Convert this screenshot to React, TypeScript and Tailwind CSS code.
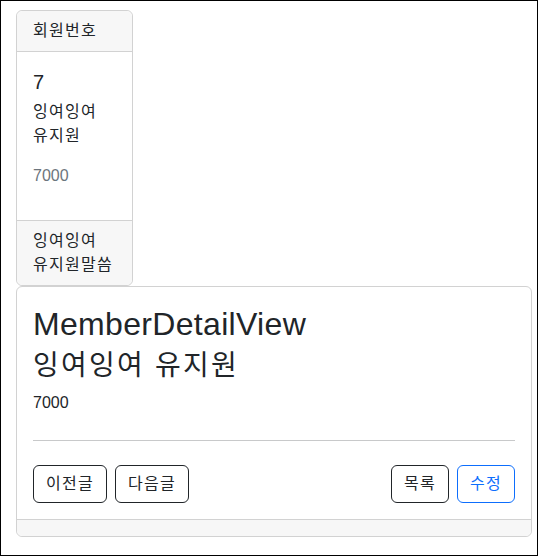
import React from "react";

const font = {
  fontFamily: '"Liberation Sans", "Noto Sans CJK KR", sans-serif',
};

// hangul text gets a bit of tracking to match the wider reference glyphs
function Ko({ children }: { children: React.ReactNode }) {
  return <span className="tracking-[0.08em]">{children}</span>;
}

function SmallCard() {
  return (
    <div className="w-[117px] border border-[#d2d2d2] rounded-md bg-white flex flex-col break-keep">
      <div className="bg-[#f7f7f7] border-b border-[#d2d2d2] px-4 py-2 leading-6 rounded-t-md">
        <Ko>회원번호</Ko>
      </div>
      <div className="p-4">
        <h5 className="text-[20px] leading-[24px] mt-0.5 mb-1.5">7</h5>
        <p className="leading-6 mb-4">
          <Ko>잉여잉여 유지원</Ko>
        </p>
        <p className="leading-6 mb-4 text-[#6c757d]">7000</p>
      </div>
      <div className="bg-[#f7f7f7] border-t border-[#d2d2d2] px-4 py-2 leading-6 rounded-b-md">
        <Ko>잉여잉여 유지원말씀</Ko>
      </div>
    </div>
  );
}

function Btn({
  label,
  primary,
}: {
  label: string;
  primary?: boolean;
}) {
  return (
    <button
      className={`border rounded-md px-3 py-1.5 leading-6 ${
        primary
          ? "border-[#0d6efd] text-[#0d6efd]"
          : "border-[#212529] text-[#212529]"
      }`}
    >
      <Ko>{label}</Ko>
    </button>
  );
}

function DetailCard() {
  return (
    <div className="w-[516px] border border-[#d2d2d2] rounded-md bg-white flex flex-col">
      <div className="p-4">
        <h2 className="text-[32px] leading-[38px] mt-0.5 mb-1.5 tracking-[0.01em]">
          MemberDetailView
        </h2>
        <h3 className="text-[28px] leading-[34px] mb-2">
          <Ko>잉여잉여 유지원</Ko>
        </h3>
        <div className="leading-6">7000</div>
        <hr className="mt-[25px] mb-6 border-t border-[#c8c9ca]" />
        <div className="flex justify-between">
          <div className="flex gap-2">
            <Btn label="이전글" />
            <Btn label="다음글" />
          </div>
          <div className="flex gap-2">
            <Btn label="목록" />
            <Btn label="수정" primary />
          </div>
        </div>
      </div>
      <div className="bg-[#f7f7f7] border-t border-[#d2d2d2] h-[17px] rounded-b-md" />
    </div>
  );
}

export default function App() {
  return (
    <div
      style={font}
      className="w-[538px] h-[556px] border border-black bg-white text-[#212529] text-base pt-[9px] pl-[15px]"
    >
      <SmallCard />
      <DetailCard />
    </div>
  );
}
